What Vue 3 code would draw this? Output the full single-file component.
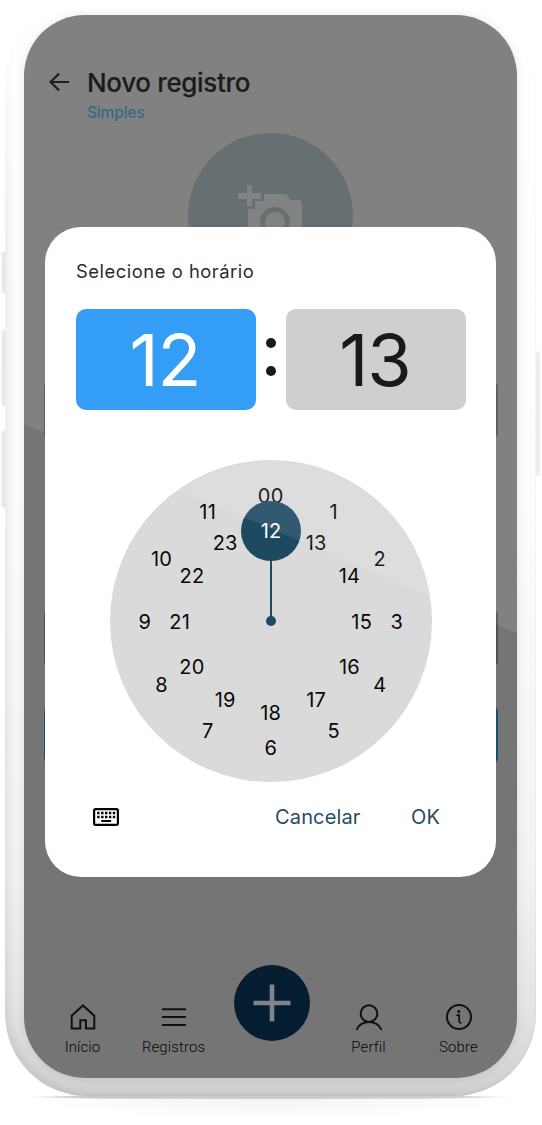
<script setup>
const rad = (n) => ((n % 12) * Math.PI) / 6
const point = (n, r) => ({
  left: `${160.7 + Math.sin(rad(n)) * r}px`,
  top: `${161.5 - Math.cos(rad(n)) * r}px`
})
const outer = ['00', 1, 2, 3, 4, 5, 6, 7, 8, 9, 10, 11].map((label, i) => ({ label, pos: point(i, 126) }))
const inner = [13, 14, 15, 16, 17, 18, 19, 20, 21, 22, 23].map((label) => ({ label, pos: point(label, 91) }))
</script>

<template>
  <div class="stage">
    <i class="side s1"></i><i class="side s2"></i><i class="side s3"></i><i class="side s4"></i>
    <i class="ground"></i><i class="ground-line"></i>
    <div class="phone">
      <div class="screen">
        <header>
          <svg class="back" viewBox="0 0 22 20"><path d="M21 10H2M10.5 1.2 1.7 10l8.8 8.8" /></svg>
          <div>
            <h1>Novo registro</h1>
            <p class="kind">Simples</p>
          </div>
        </header>
        <div class="photo">
          <svg viewBox="0 0 66 64">
            <path class="cam" fill-rule="evenodd" d="M10 24h7v-8h9V9h22l5 6h7q4 0 4 4v41q0 4-4 4H14q-4 0-4-4zM37 22a15 15 0 1 0 .01 0zM37 27a10 10 0 1 1-.01 0z" />
            <path class="cam" d="M9 0h5v8h9v6h-9v7H9v-7H0V8h9z" />
          </svg>
        </div>

        <i class="field f1"></i><i class="field f2"></i><i class="field f3"></i>

        <nav>
          <div class="tab">
            <svg viewBox="0 0 26 26"><path d="M1.7 24.6V11.7L13 1.4l11.3 10.3v12.9h-8.4v-8.4h-5.6v8.4z" /></svg>
            <span>Início</span>
          </div>
          <div class="tab">
            <svg viewBox="0 0 26 26"><path d="M1.8 5.2h22.4M1.8 13.1h22.4M1.8 21h22.4" /></svg>
            <span>Registros</span>
          </div>
          <div class="add"><svg viewBox="0 0 38 38"><path d="M19 0.5v37M0.5 19h37" /></svg></div>
          <div class="tab">
            <svg viewBox="0 0 26 26"><circle cx="13" cy="9.6" r="8.3" /><path d="M.9 25.2C3 20.6 7.3 17.9 13 17.9s10 2.7 12.1 7.3" /></svg>
            <span>Perfil</span>
          </div>
          <div class="tab">
            <svg viewBox="0 0 26 26"><circle cx="13" cy="13" r="12" /><path class="thin" d="M11.2 11.2h2v6.4q0 1.2 1.6 1.2" /><circle class="dot" cx="12.8" cy="7.6" r="1.5" /></svg>
            <span>Sobre</span>
          </div>
        </nav>

        <section class="dialog">
          <h2>Selecione o horário</h2>
          <div class="time">
            <div class="box active">12</div>
            <div class="colon"><i></i><i></i></div>
            <div class="box">13</div>
          </div>
          <div class="clock">
            <span v-for="n in outer" :key="'o' + n.label" class="num" :style="n.pos">{{ n.label }}</span>
            <span v-for="n in inner" :key="'i' + n.label" class="num" :style="n.pos">{{ n.label }}</span>
            <i class="hand"></i><i class="hub"></i>
            <div class="knob">12</div>
          </div>
          <footer>
            <svg class="keys" viewBox="0 0 26 18">
              <rect x="1.1" y="1.1" width="23.8" height="15.8" rx="1.6" />
              <path class="dots" d="M4.2 5h18M4.2 9h18" />
              <path class="bar" d="M8.3 13h9.8" />
            </svg>
            <span class="cancel">Cancelar</span>
            <span>OK</span>
          </footer>
        </section>
        <i class="glare"></i>
      </div>
    </div>
  </div>
</template>

<style>
html, body { background: #fff; overflow: hidden; }
</style>

<style scoped>
* { box-sizing: border-box; }
i { display: block; }
.stage { position: relative; width: 542px; height: 1125px; overflow: hidden; background: #fff; font-family: Inter, "Liberation Sans", sans-serif; }
.phone {
  position: absolute; left: 5px; top: 0; width: 531px; height: 1096px; border-radius: 82px; padding: 15px 19px 18px;
  background: linear-gradient(180deg, #fff 0%, #fdfdfd 45%, #f2f2f2 80%, #e4e4e4 92%, #cfcfcf 100%);
}
.phone::before {
  content: ""; position: absolute; inset: 0; border-radius: 82px;
  box-shadow: inset 5px -2px 7px rgba(0, 0, 0, .07), inset -1px -1px 2px rgba(0, 0, 0, .03);
  mask-image: linear-gradient(180deg, transparent 0, #000 22%);
}
.screen { position: relative; width: 493px; height: 1063px; border-radius: 61px; overflow: hidden; background: #757575; box-shadow: 0 0 10px rgba(0, 0, 0, .1); }
.side { position: absolute; background: #e7e7e7; border-radius: 3px 0 0 3px; width: 5px; left: 1px; box-shadow: inset 1px 1px 2px #f8f8f8; }
.s1 { top: 251px; height: 42px; border-radius: 0; }
.s2 { top: 329px; height: 77px; }
.s3 { top: 430px; height: 78px; }
.s4 { top: 351px; height: 125px; left: 535px; border-radius: 0 3px 3px 0; background: #ececec; }
.ground { position: absolute; left: 25px; top: 1098px; width: 490px; height: 22px; background: radial-gradient(ellipse 50% 100% at 50% 0, #f3f3f3, #fff); }
.ground-line { position: absolute; left: 24px; top: 1095px; width: 490px; height: 4px; background: linear-gradient(90deg, rgba(200, 200, 200, 0), #c9c9c9 12%, #cfcfcf 88%, rgba(200, 200, 200, 0)); border-radius: 50%; }

header { display: flex; padding: 52px 0 0 25px; height: 118px; }
.back { width: 21px; height: 20px; margin: 5px 17px 0 0; fill: none; stroke: #0a0a0a; stroke-width: 2.3; }
h1 { margin: 0; font-size: 26px; line-height: 32px; font-weight: 500; color: #050505; letter-spacing: -.35px; -webkit-text-stroke: .15px #050505; }
.kind { margin: 5px 0 0; font-size: 15.5px; line-height: 18px; font-weight: 500; color: #235c78; letter-spacing: -.15px; }
.photo { width: 165px; height: 165px; margin-left: 164px; border-radius: 50%; background: #576265; padding: 52px 0 0 50px; }
.photo svg { width: 66px; height: 64px; display: block; }
.cam { fill: #757676; }
.field { position: absolute; left: 19.5px; width: 454.5px; height: 58px; border-radius: 6px; border: 2px solid #505050; }
.f1 { top: 366px; }
.f2 { top: 594px; }
.f3 { top: 691px; background: #15506e; border-color: #15506e; }

nav { position: absolute; left: 0; right: 0; bottom: 0; height: 113px; display: grid; grid-template-columns: 117px 65px 131px 63px 117px; font-family: Roboto, sans-serif; }
.tab { display: flex; flex-direction: column; align-items: center; padding-top: 39px; font-size: 15px; line-height: 18px; font-weight: 300; color: #080808; letter-spacing: .1px; }
.tab svg { width: 26px; height: 26px; margin-bottom: 8px; fill: none; stroke: #101010; stroke-width: 2; overflow: visible; stroke-linecap: round; }
.tab svg .thin { stroke-width: 1.7; }
.tab svg .dot { fill: #101010; stroke: none; }
.add { width: 76px; height: 76px; border-radius: 50%; background: #041d30; margin: 0 0 0 28px; display: grid; place-items: center; }
.add svg { width: 38px; height: 38px; stroke: #808589; stroke-width: 4.6; }

.dialog { position: absolute; left: 21px; top: 212px; width: 451px; height: 650px; border-radius: 36px; background: #fff; padding: 32px 30px 0 31px; }
h2 { margin: 0; height: 50px; font-size: 18.4px; line-height: 24px; font-weight: 400; color: #141414; letter-spacing: .52px; white-space: nowrap; }
.time { display: flex; height: 101px; }
.box { width: 180px; border-radius: 10px; background: #cbcbcb; color: #030303; font-size: 72px; line-height: 102px; text-align: center; letter-spacing: -1.3px; padding-right: 2.5px; }
.active { background: #2094f4; color: #fff; }
.colon { width: 30px; padding-top: 29px; display: flex; flex-direction: column; align-items: center; gap: 18px; }
.colon i { width: 10px; height: 10px; border-radius: 50%; background: #030303; }
.clock { position: relative; width: 322px; height: 322px; border-radius: 50%; background: #dadada; margin: 50px 0 0 34px; }
.num { position: absolute; transform: translate(-50%, -50%); font-size: 20px; line-height: 24px; color: #080808; letter-spacing: .2px; }
.hand { position: absolute; left: 159.6px; top: 90px; width: 2.8px; height: 71px; background: #204c63; }
.hub { position: absolute; left: 156px; top: 156px; width: 10px; height: 10px; border-radius: 50%; background: #1c4a61; }
.knob { position: absolute; left: 131px; top: 40.5px; width: 60px; height: 60px; border-radius: 50%; background: #1d4961; color: #fff; font-size: 20px; line-height: 61px; text-align: center; }
footer { display: flex; align-items: center; height: 40px; margin-top: 15px; padding-left: 17px; font-size: 20px; color: #274d63; letter-spacing: .15px; }
.keys { width: 26px; height: 18px; fill: none; stroke: #000; }
.keys rect { stroke-width: 2.2; }
.dots { stroke-width: 2.4; stroke-dasharray: 2.4 1.5; }
.bar { stroke-width: 2; }
.cancel { margin: 0 50.5px 0 156px; }
.glare { position: absolute; left: 0; top: 0; width: 493px; height: 618px; background: rgba(255, 255, 255, .09); clip-path: polygon(0 0, 100% 0, 100% 100%, 0 409px); pointer-events: none; }
</style>
